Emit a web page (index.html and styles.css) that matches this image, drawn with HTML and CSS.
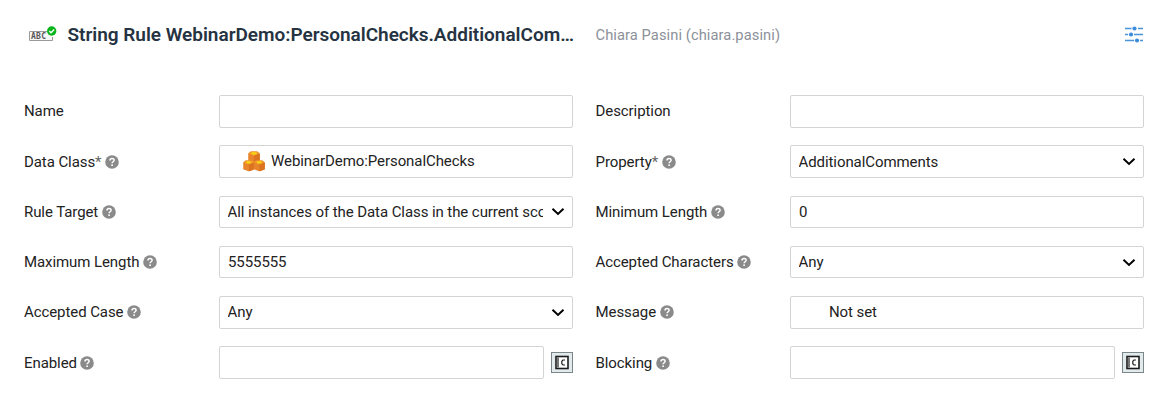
FILE: index.html
```html
<!DOCTYPE html>
<html lang="en">
<head>
<meta charset="utf-8">
<title>String Rule</title>
<link rel="stylesheet" href="styles.css">
</head>
<body>
<svg class="defs" aria-hidden="true">
  <symbol id="help" viewBox="0 0 14 14"><circle cx="7" cy="7" r="6.8" fill="#8a8a8a"/><path d="M5 5.4C5 2.8 9.1 2.8 9.1 5.3C9.1 6.8 7.1 6.7 7.1 8.3" fill="none" stroke="#fff" stroke-width="1.5"/><rect x="6.3" y="9.4" width="1.6" height="1.6" fill="#fff"/></symbol>
  <symbol id="chevron" viewBox="0 0 14 9"><path d="M1.5 1.7L7 6.9L12.5 1.7" fill="none" stroke="#000" stroke-width="2"/></symbol>
  <symbol id="context" viewBox="0 0 22 21"><rect x=".5" y=".5" width="21" height="20" fill="#e2eaec" stroke="#7b868a"/><rect x="5" y="4.5" width="12" height="12" fill="#fff" stroke="#1c1c1c" stroke-width="1.6"/><rect x="6" y="5.4" width="2" height="10.2" fill="#777"/><path d="M14 8H12L10.8 9.300V11.700L12 13H14" fill="none" stroke="#222" stroke-width="1.200"/></symbol>
  <symbol id="cube" viewBox="0 0 11 11"><path d="M.2 2.300L2.500.5H8.500L10.800 2.300V8.800L5.800 11L.2 8.800Z" fill="#e8852c"/><path d="M.2 2.300L2.500.5H8.500L10.800 2.300L5.500 4.300Z" fill="#f09a2c"/><path d="M5.500 4.300L10.800 2.300V8.800L5.800 11Z" fill="#dc741f"/><ellipse cx="5.500" cy="2.200" rx="2.600" ry="1.300" fill="#f7cf14"/></symbol>
</svg>
<header class="header">
  <div class="heading">
    <svg class="rule-icon" width="28" height="18" viewBox="0 0 28 18"><path d="M18 5.500H.5V14.500H23.500V11" fill="#f7f7f7" stroke="#999"/><text class="abc" x="2" y="13" textLength="15" lengthAdjust="spacing">ABC</text><circle cx="22.700" cy="5" r="4.700" fill="#08b51b"/><path d="M20.300 5L22 6.800L25.200 3.500" fill="none" stroke="#fff" stroke-width="1.300"/></svg>
    <h1 class="title">String Rule WebinarDemo:PersonalChecks.AdditionalComments</h1>
  </div>
  <span class="user">Chiara Pasini (chiara.pasini)</span>
  <svg class="sliders" width="18" height="17" viewBox="0 0 18 17"><path d="M0 2.500H6.500M13 2.500H18M0 8.500H3M9 8.500H18M0 14.500H9M15 14.500H18" stroke="#4a94dc" stroke-width="1.300"/><g fill="#3c8cdb"><circle cx="9.500" cy="2.500" r="2.100"/><circle cx="6" cy="8.500" r="2.100"/><circle cx="12" cy="14.500" r="2.100"/></g></svg>
</header>
<main class="form">
  <div class="row"><span class="label">Name</span><div class="field"></div></div>
  <div class="row"><span class="label">Description</span><div class="field"></div></div>

  <div class="row"><span class="label">Data Class<i class="star">*</i><svg class="help"><use href="#help"/></svg></span><div class="field picker"><svg class="cubes" width="22" height="21" viewBox="0 0 22 21"><use href="#cube" x="5" y="0" width="12" height="12"/><use href="#cube" x="0" y="9" width="11.500" height="11.500"/><use href="#cube" x="10.500" y="9" width="11.500" height="11.500"/></svg><span class="picked">WebinarDemo:PersonalChecks</span></div></div>
  <div class="row"><span class="label">Property<i class="star">*</i><svg class="help"><use href="#help"/></svg></span><div class="field select"><span class="value">AdditionalComments</span><svg class="chevron"><use href="#chevron"/></svg></div></div>

  <div class="row"><span class="label">Rule Target<svg class="help"><use href="#help"/></svg></span><div class="field select"><span class="value">All instances of the Data Class in the current scope</span><svg class="chevron"><use href="#chevron"/></svg></div></div>
  <div class="row"><span class="label">Minimum Length<svg class="help"><use href="#help"/></svg></span><div class="field"><span>0</span></div></div>

  <div class="row"><span class="label">Maximum Length<svg class="help"><use href="#help"/></svg></span><div class="field"><span>5555555</span></div></div>
  <div class="row"><span class="label">Accepted Characters<svg class="help"><use href="#help"/></svg></span><div class="field select"><span class="value">Any</span><svg class="chevron"><use href="#chevron"/></svg></div></div>

  <div class="row"><span class="label">Accepted Case<svg class="help"><use href="#help"/></svg></span><div class="field select"><span class="value">Any</span><svg class="chevron"><use href="#chevron"/></svg></div></div>
  <div class="row"><span class="label">Message<svg class="help"><use href="#help"/></svg></span><div class="field message"><span>Not set</span></div></div>

  <div class="row"><span class="label">Enabled<svg class="help"><use href="#help"/></svg></span><div class="field"></div><svg class="context"><use href="#context"/></svg></div>
  <div class="row"><span class="label">Blocking<svg class="help"><use href="#help"/></svg></span><div class="field"></div><svg class="context"><use href="#context"/></svg></div>
</main>
</body>
</html>
```
FILE: styles.css
```css
* { box-sizing: border-box; }
body { margin: 0; background: #fff; color: #222; font: 400 15px/20px Roboto, sans-serif; letter-spacing: -.08px; }
.defs { display: none; }
.header { display: grid; grid-template-columns: 551px 1fr 18px; column-gap: 20.500px; align-items: center; height: 70px; padding: 0 24px; }
.heading { display: flex; align-items: center; min-width: 0; padding-left: 5px; }
.rule-icon { flex: none; margin-right: 10.500px; }
.abc { font: 700 8px "DejaVu Sans Mono", monospace; letter-spacing: 0; fill: #555; }
.title { margin: 0; min-width: 0; overflow: hidden; white-space: nowrap; text-overflow: ellipsis; font-size: 19px; line-height: 26px; font-weight: 600; letter-spacing: -.02px; color: #253342; }
.user { color: #8b9099; font-size: 14.700px; letter-spacing: .08px; }
.sliders { margin-top: -1px; }
.form { display: grid; grid-template-columns: 549px 548.5px; column-gap: 22.5px; row-gap: 17.750px; padding: 25px 0 0 24px; }
.row { display: flex; align-items: center; height: 32.500px; }
.label { flex: none; display: flex; align-items: center; width: 195px; }
.row:nth-child(even) .label { width: 194.500px; }
.star { font-style: normal; color: #666; }
.help { width: 14px; height: 14px; margin-left: 3.500px; }
.field { flex: 1; min-width: 0; height: 100%; display: flex; align-items: center; padding-left: 8px; border: 1px solid #d4d4d4; border-radius: 2px; white-space: nowrap; }
.select { padding: 0 7px 0 7.500px; }
.value { flex: 1; min-width: 0; overflow: hidden; margin-right: 8px; }
.chevron { flex: none; width: 14px; height: 9px; }
.picker { padding-left: 23px; }
.picked { padding-bottom: 1px; }
.cubes { margin-right: 6px; }
.message { padding-left: 38px; }
.context { flex: none; width: 22px; height: 21px; margin-left: 7px; }
```
